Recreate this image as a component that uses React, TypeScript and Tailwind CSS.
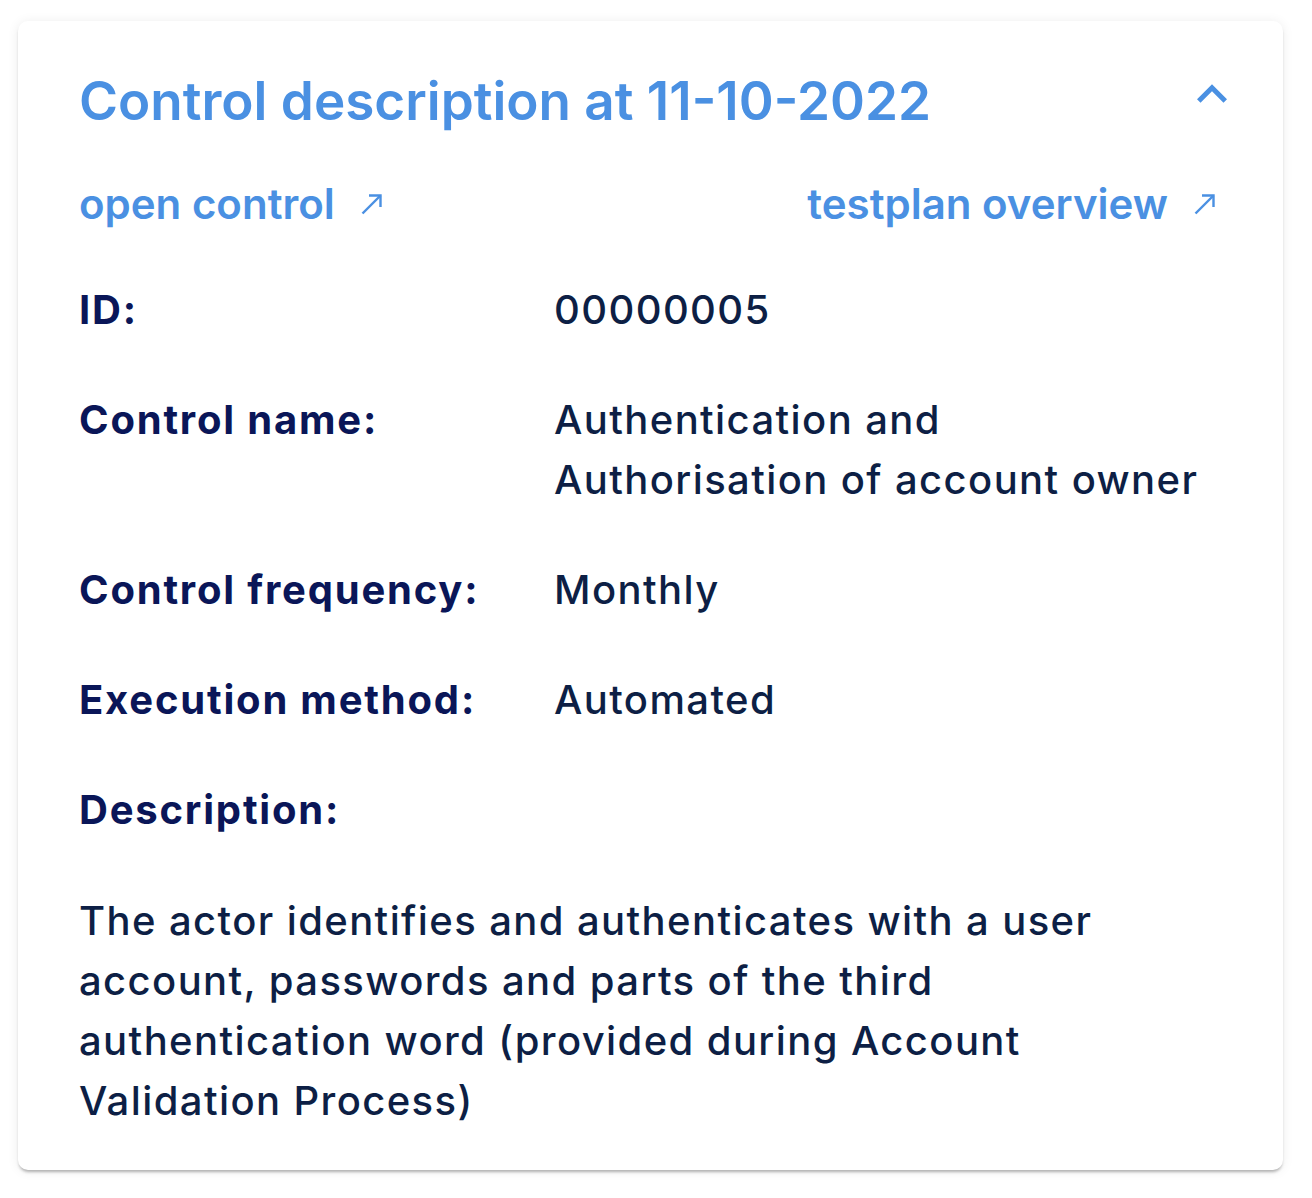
import { useState } from 'react';

const details = [
  { label: 'ID:', value: ['00000005'] },
  { label: 'Control name:', value: ['Authentication and', 'Authorisation of account owner'] },
  { label: 'Control frequency:', value: ['Monthly'] },
  { label: 'Execution method:', value: ['Automated'] },
];

const descriptionLines = [
  'The actor identifies and authenticates with a user',
  'account, passwords and parts of the third',
  'authentication word (provided during Account',
  'Validation Process)',
];

function ExternalArrow() {
  return (
    <svg width="22" height="22" viewBox="0 0 22 22" fill="none" stroke="currentColor" strokeWidth="2.4">
      <path d="M1.5 20.5 L19.5 2.5" />
      <path d="M8 2.5 H19.5 V14" />
    </svg>
  );
}

function ExpandLess() {
  return (
    <svg width="30" height="19" viewBox="6 8 12 7.41" fill="currentColor">
      <path d="M12 8l-6 6 1.41 1.41L12 10.83l4.59 4.58L18 14z" />
    </svg>
  );
}

export default function App() {
  const [open, setOpen] = useState(true);

  return (
    <div className="min-h-[1198px] bg-white pt-[21px] pl-[18px] font-['Inter',sans-serif]">
      <div className="w-[1265px] rounded-[10px] bg-white pl-[61px] pr-[56px] pt-[44px] pb-[39px] shadow-[0_3px_3px_-1px_rgba(0,0,0,0.28),0_1px_12px_rgba(0,0,0,0.08)]">
        {/* Header */}
        <div className="flex items-start justify-between">
          <h2 className="text-[53px] leading-[72px] font-semibold text-[#4a90e2]">
            Control description at 11-10-2022
          </h2>
          <button onClick={() => setOpen(!open)} className="mt-[19px] text-[#4a90e2]">
            <ExpandLess />
          </button>
        </div>

        {open && (
          <>
            {/* Links */}
            <div className="mt-[37px] mr-[11px] flex items-center justify-between text-[42px] leading-[60px] font-semibold text-[#4a90e2]">
              <a className="flex items-center gap-[26px]">
                open control
                <ExternalArrow />
              </a>
              <a className="flex items-center gap-[26px]">
                testplan overview
                <ExternalArrow />
              </a>
            </div>

            {/* Details */}
            <div className="mt-[46px] grid grid-cols-[475px_1fr] gap-y-[50px] text-[40px] leading-[60px] tracking-[1.4px]">
              {details.map((d) => (
                <div key={d.label} className="contents">
                  <div className="font-bold tracking-[1.8px] text-[#0a1658]">{d.label}</div>
                  <div className="font-medium text-[#0d1f45]">
                    {d.value.map((line) => (
                      <div key={line}>{line}</div>
                    ))}
                  </div>
                </div>
              ))}
              <div className="font-bold tracking-[1.8px] text-[#0a1658]">Description:</div>
            </div>

            <p className="mt-[51px] text-[40px] leading-[60px] tracking-[1.4px] font-medium text-[#0d1f45]">
              {descriptionLines.map((line) => (
                <span key={line} className="block">
                  {line}
                </span>
              ))}
            </p>
          </>
        )}
      </div>
    </div>
  );
}
